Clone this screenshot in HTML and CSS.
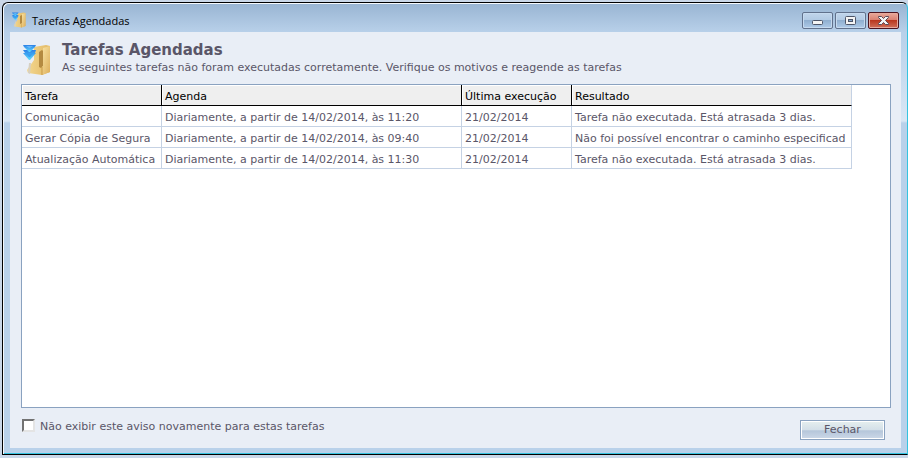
FILE: index.html
```
<!DOCTYPE html>
<html lang="pt-BR">
<head>
  <meta charset="UTF-8" />
  <meta name="viewport" content="width=device-width, initial-scale=1.0"/>
  <title>Tarefas Agendadas</title>
  <link rel="stylesheet" href="styles.css">
</head>
<body>
  <svg class="defs" width="0" height="0" aria-hidden="true">
    <defs>
      <linearGradient id="gold" x1="0" y1="0" x2="1" y2="1">
        <stop offset="0" stop-color="#f9e3a4"/>
        <stop offset="1" stop-color="#dcae5a"/>
      </linearGradient>
      <linearGradient id="goldFront" x1="0" y1="0" x2="1" y2="0">
        <stop offset="0" stop-color="#f3d78f"/>
        <stop offset="1" stop-color="#e2b965"/>
      </linearGradient>
      <linearGradient id="blue" x1="0" y1="0" x2="0" y2="1">
        <stop offset="0" stop-color="#2c80e6"/>
        <stop offset="1" stop-color="#5fdcff"/>
      </linearGradient>
      <symbol id="folder" viewBox="0 0 30 32">
        <path d="M12 3 L24 1 L28 2 V28 L20 31 L6 29 L5 26 L12 16 Z" fill="url(#goldFront)"/>
        <path d="M17 8 L20 6 L21 7 V22 L19 24 L17 23 Z" fill="#b48a41"/>
        <path d="M21 4 L28 2 V28 L20 31 V23 L21 22 Z" fill="url(#gold)"/>
        <path d="M20 23 V31" stroke="#c99a46" fill="none"/>
        <path d="M7 19 L6 29 L8 30 L9 19 Z" fill="#d6d0c2"/>
        <path d="M1 6 H14 L13 9 H14 L8 16 H7 L1 9 H3 Z" fill="url(#blue)"/>
        <path d="M1 1 H14 L13 3 L8 8 H7 L2 3 Z" fill="url(#blue)"/>
        <path d="M4 2 H11 L8 4 H7 Z" fill="#67b4f8"/>
        <path d="M3 8 L7 10 H8 L12 8 L8 13 H7 Z" fill="#36a0f2"/>
      </symbol>
    </defs>
  </svg>

  <main class="window">
    <header class="titlebar">
      <svg class="icon-small"><use href="#folder"/></svg>
      <span class="caption">Tarefas Agendadas</span>
      <div class="controls">
        <button class="control" type="button" aria-label="Minimizar">
          <svg width="13" height="11"><rect x="1.5" y="5.5" width="10" height="4" rx="1" fill="#f4f4f4" stroke="#4d5568"/></svg>
        </button>
        <button class="control" type="button" aria-label="Maximizar">
          <svg width="13" height="11"><rect x="1.5" y="1.5" width="10" height="8" rx="1" fill="#f4f4f4" stroke="#4d5568"/><rect x="4.5" y="4.5" width="4" height="2" fill="#86a9cf" stroke="#4d5568"/></svg>
        </button>
        <button class="control close" type="button" aria-label="Fechar janela">
          <svg width="13" height="11"><path d="M1.5 1.5 H4.5 L6.5 3.5 L8.5 1.5 H11.5 V2.5 L8.5 5.5 L11.5 8.5 V9.5 H8.5 L6.5 7.5 L4.5 9.5 H1.5 V8.5 L4.5 5.5 L1.5 2.5 Z" fill="#f4f4f4" stroke="#5a4a58"/></svg>
        </button>
      </div>
    </header>

    <section class="content">
      <div class="heading">
        <svg class="icon-large"><use href="#folder"/></svg>
        <div>
          <h1>Tarefas Agendadas</h1>
          <p>As seguintes tarefas não foram executadas corretamente. Verifique os motivos e reagende as tarefas</p>
        </div>
      </div>

      <div class="list">
        <table>
          <colgroup>
            <col class="col-task">
            <col class="col-schedule">
            <col class="col-last">
            <col class="col-result">
          </colgroup>
          <thead>
            <tr><th>Tarefa</th><th>Agenda</th><th>Última execução</th><th>Resultado</th></tr>
          </thead>
          <tbody>
            <tr>
              <td>Comunicação</td>
              <td>Diariamente, a partir de 14/02/2014, às 11:20</td>
              <td>21/02/2014</td>
              <td>Tarefa não executada. Está atrasada 3 dias.</td>
            </tr>
            <tr>
              <td>Gerar Cópia de Segura</td>
              <td>Diariamente, a partir de 14/02/2014, às 09:40</td>
              <td>21/02/2014</td>
              <td>Não foi possível encontrar o caminho especificad</td>
            </tr>
            <tr>
              <td>Atualização Automática</td>
              <td>Diariamente, a partir de 14/02/2014, às 11:30</td>
              <td>21/02/2014</td>
              <td>Tarefa não executada. Está atrasada 3 dias.</td>
            </tr>
          </tbody>
        </table>
      </div>

      <footer class="footer">
        <input type="checkbox" id="hideNotice">
        <label for="hideNotice">Não exibir este aviso novamente para estas tarefas</label>
        <button class="btn" type="button">Fechar</button>
      </footer>
    </section>
  </main>
</body>
</html>
```
FILE: styles.css
```
* {
  box-sizing: border-box;
}
body {
  margin: 0;
  min-height: 100vh;
  display: flex;
  padding: 2px 0 3px 2px;
  background: #cad7e8;
  font-family: Verdana, "DejaVu Sans", sans-serif;
  font-size: 11px;
  color: #5a5668;
}
.defs {
  position: absolute;
}
.window {
  flex: 1;
  min-width: 0;
  display: flex;
  flex-direction: column;
  padding: 0 6px 6px 7px;
  border: 1px solid #000;
  border-right: 1px solid #35c3e0;
  border-radius: 6px 6px 0 0;
  background: linear-gradient(to bottom, #98b4d2, #b9d1ea 30px, #b9d1ea 32px, #d9e7f5 118px, #b9d1ea 120px);
  box-shadow: inset 1px 1px 0 #f4f8fc, inset 0 -1px 0 #35c3e0;
}
.titlebar {
  height: 29px;
  display: flex;
  align-items: center;
  gap: 5px;
  padding: 5px 2px 0 1px;
}
.icon-small {
  width: 16px;
  height: 16px;
}
.caption {
  flex: 1;
  font-family: "Segoe UI", "Open Sans", sans-serif;
  font-size: 11px;
  color: #000;
}
.controls {
  display: flex;
  gap: 2px;
}
.control {
  width: 31px;
  height: 17px;
  display: flex;
  align-items: center;
  justify-content: center;
  padding: 0;
  border: 1px solid #61718c;
  border-radius: 2px;
  background: linear-gradient(to bottom, #c1d5eb 0, #b2cae4 46%, #90afd0 50%, #aecae8 100%);
  box-shadow: inset 0 0 0 1px #c6daef;
}
.control.close {
  border-color: #4c1420;
  background: linear-gradient(to bottom, #e9a99b 0, #d98071 46%, #b9371f 50%, #d0705a 100%);
  box-shadow: inset 0 0 0 1px #e6a99d;
}
.content {
  flex: 1;
  display: flex;
  flex-direction: column;
  padding: 8px 10px 8px 11px;
  background: #e9eef6;
}
.heading {
  display: flex;
  gap: 10px;
  height: 44px;
  padding-left: 1px;
}
.icon-large {
  width: 30px;
  height: 32px;
  margin-top: 4px;
}
.heading h1 {
  margin: 0;
  font-size: 15px;
  line-height: 20px;
}
.heading p {
  margin: 0;
  line-height: 16px;
}
.list {
  flex: 1;
  border: 1px solid #8aa2c0;
  background: #fff;
  overflow: hidden;
}
table {
  width: 830px;
  table-layout: fixed;
  border-collapse: separate;
  border-spacing: 0;
}
.col-task {
  width: 140px;
}
.col-schedule {
  width: 300px;
}
.col-last {
  width: 110px;
}
.col-result {
  width: 280px;
}
th, td {
  height: 21px;
  padding: 2px 2px 0 3px;
  border-right: 1px solid #c5d2e4;
  border-bottom: 1px solid #c5d2e4;
  font-weight: normal;
  text-align: left;
  white-space: nowrap;
  overflow: hidden;
}
th {
  border-right-color: #000;
  border-bottom-color: #000;
  background: #efefef;
  box-shadow: inset 1px 1px 0 #fff;
  color: #000;
}
th:last-child {
  border-right-color: #c5d2e4;
}
.footer {
  display: flex;
  align-items: center;
  gap: 5px;
  padding: 11px 6px 0 1px;
}
.footer input {
  appearance: none;
  width: 13px;
  height: 13px;
  margin: 0 0 8px;
  border: 2px solid;
  border-color: #727272 #e4e4e4 #e4e4e4 #727272;
  background: #fff;
}
.footer input:checked {
  background: #5a5668;
}
.footer label {
  flex: 1;
  padding-bottom: 6px;
}
.btn {
  width: 85px;
  height: 20px;
  padding: 0;
  border: 1px solid #8aa2c0;
  background: linear-gradient(to bottom, #e6efef 0, #d3dfe8 50%, #b5c6da 54%, #ccd8e8 100%);
  box-shadow: inset 0 0 0 1px #fff;
  font: inherit;
  color: inherit;
}
```
